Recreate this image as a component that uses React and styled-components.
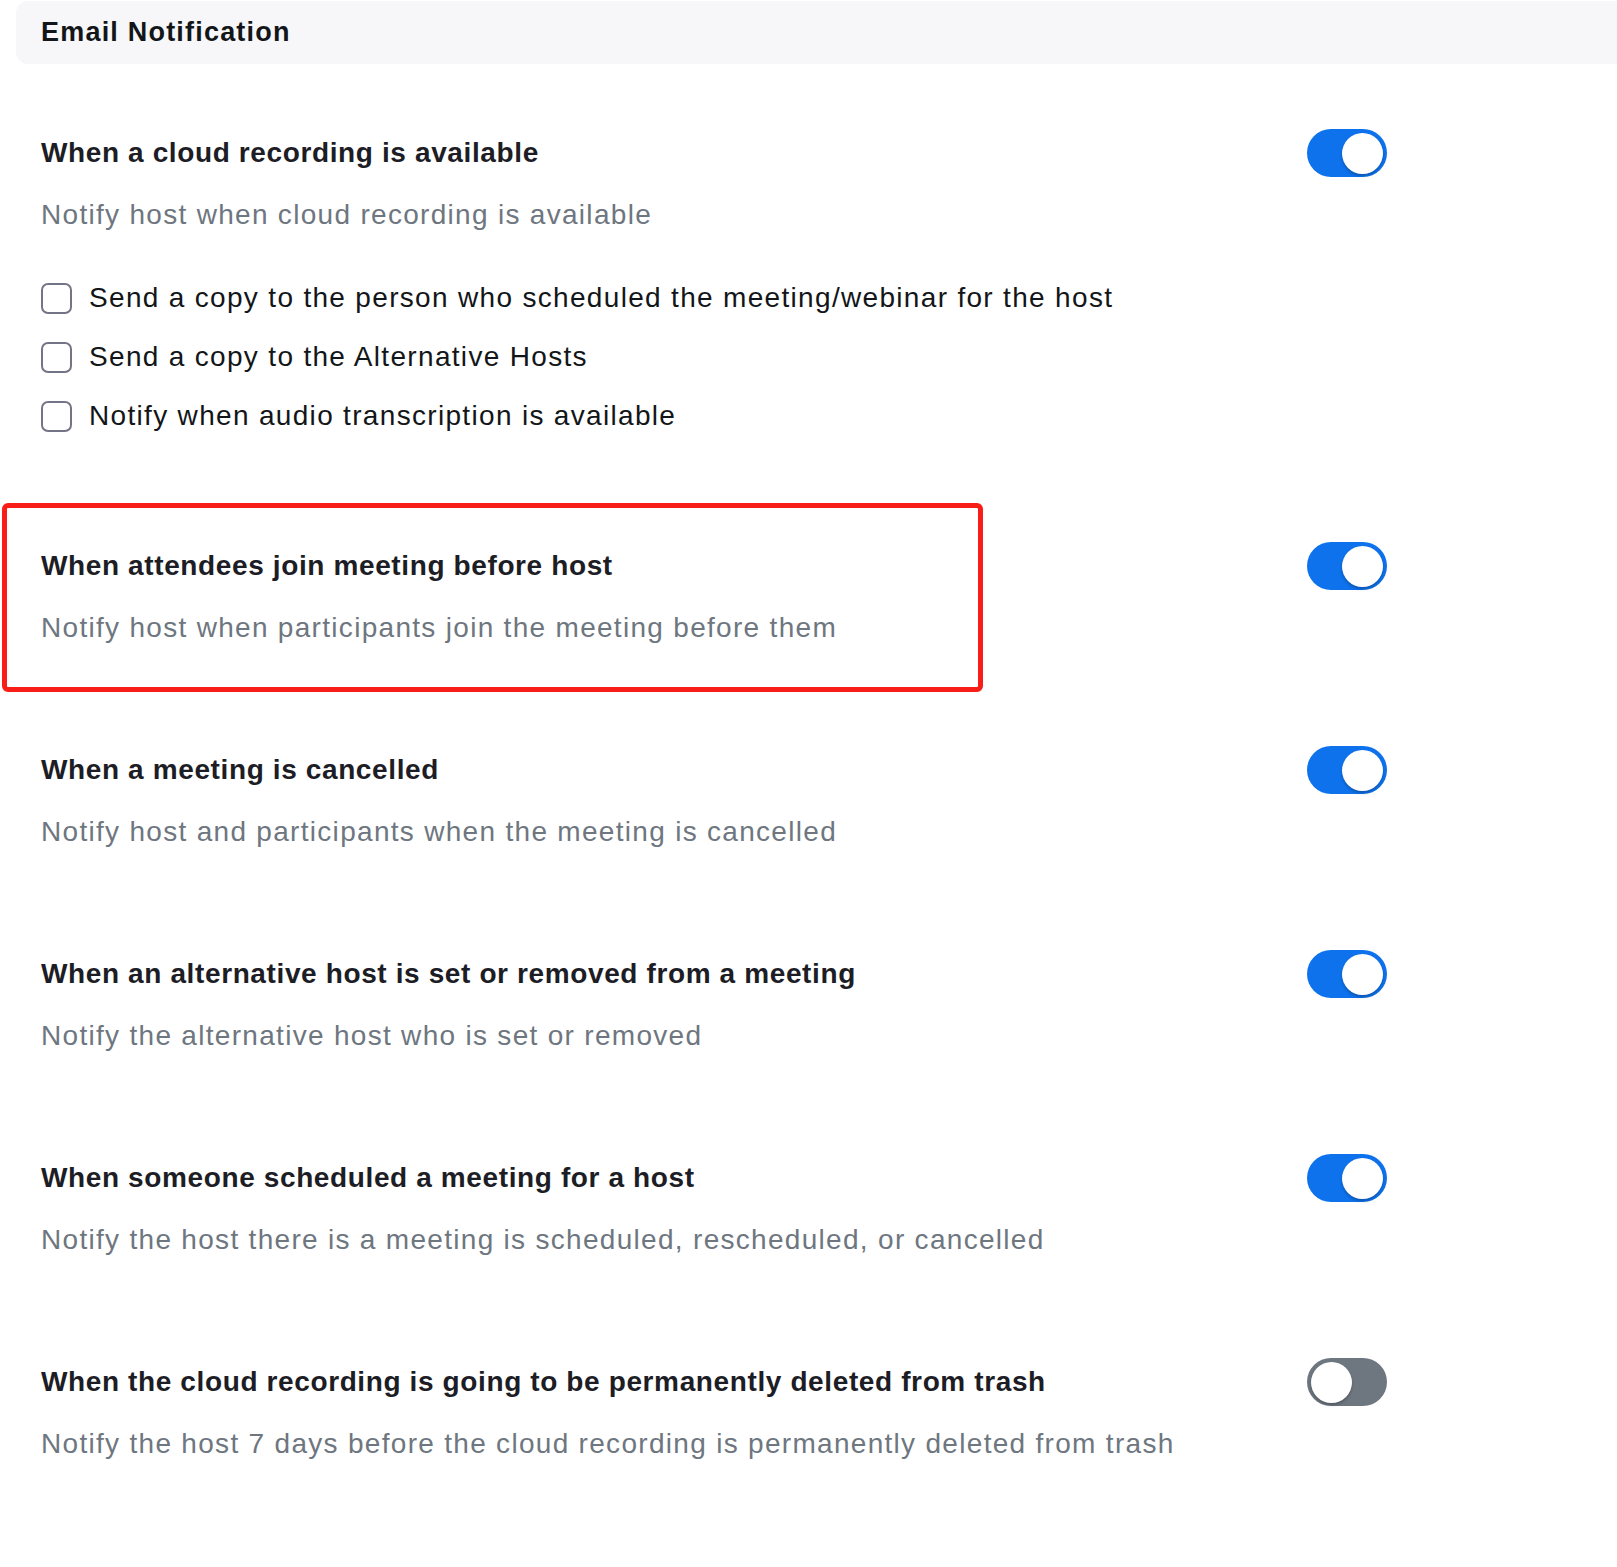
import React, { useState } from "react";
import styled, { createGlobalStyle } from "styled-components";

const GlobalStyle = createGlobalStyle`
  body {
    margin: 0;
    background: #ffffff;
    font-family: "Liberation Sans", Arial, sans-serif;
    color: #131619;
  }
`;

const settings = [
  {
    title: "When a cloud recording is available",
    desc: "Notify host when cloud recording is available",
    on: true,
    options: [
      "Send a copy to the person who scheduled the meeting/webinar for the host",
      "Send a copy to the Alternative Hosts",
      "Notify when audio transcription is available",
    ],
  },
  {
    title: "When attendees join meeting before host",
    desc: "Notify host when participants join the meeting before them",
    on: true,
    marked: true,
  },
  {
    title: "When a meeting is cancelled",
    desc: "Notify host and participants when the meeting is cancelled",
    on: true,
  },
  {
    title: "When an alternative host is set or removed from a meeting",
    desc: "Notify the alternative host who is set or removed",
    on: true,
  },
  {
    title: "When someone scheduled a meeting for a host",
    desc: "Notify the host there is a meeting is scheduled, rescheduled, or cancelled",
    on: true,
  },
  {
    title: "When the cloud recording is going to be permanently deleted from trash",
    desc: "Notify the host 7 days before the cloud recording is permanently deleted from trash",
    on: false,
  },
];

const Toggle = ({ on, onClick }) => (
  <Track $on={on} onClick={onClick}>
    <Knob $on={on} />
  </Track>
);

const Setting = ({ item }) => {
  const [on, setOn] = useState(item.on);
  return (
    <Section $marked={item.marked}>
      <Title>{item.title}</Title>
      <Toggle on={on} onClick={() => setOn(!on)} />
      <Desc>{item.desc}</Desc>
      {item.options && (
        <Options>
          {item.options.map((o) => (
            <Option key={o}>
              <Box type="checkbox" />
              <span>{o}</span>
            </Option>
          ))}
        </Options>
      )}
    </Section>
  );
};

const App = () => {
  return (
    <Page>
      <GlobalStyle />
      <Header>Email Notification</Header>
      <List>
        {settings.map((s) => (
          <Setting key={s.title} item={s} />
        ))}
      </List>
    </Page>
  );
};

const Page = styled.div`
  width: 1617px;
  min-height: 1567px;
  padding-top: 1px;
  box-sizing: border-box;
`;

const Header = styled.div`
  margin-left: 16px;
  height: 63px;
  background: #f7f7fa;
  border-radius: 12px 0 0 12px;
  padding-left: 25px;
  display: flex;
  align-items: center;
  font-size: 27px;
  font-weight: 700;
  letter-spacing: 1.2px;
  color: #131619;
`;

const List = styled.div`
  display: flex;
  flex-direction: column;
  gap: 19px;
  margin-top: 28px;
`;

const Section = styled.div`
  position: relative;
  display: grid;
  grid-template-columns: 1266px 80px;
  align-items: center;
  padding: 40px 0 41px 41px;

  &::after {
    content: "";
    display: ${(p) => (p.$marked ? "block" : "none")};
    position: absolute;
    left: 2px;
    top: -2px;
    width: 981px;
    height: calc(100% + 4px);
    box-sizing: border-box;
    border: 5px solid #f81d16;
    border-radius: 6px;
    pointer-events: none;
  }
`;

const Title = styled.div`
  grid-column: 1;
  font-size: 28px;
  line-height: 42px;
  font-weight: 700;
  color: #1d1d26;
  letter-spacing: 0.62px;
`;

const Desc = styled.div`
  grid-column: 1;
  margin-top: 20px;
  font-size: 28px;
  line-height: 42px;
  letter-spacing: 1.3px;
  color: #6e7680;
`;

const Options = styled.div`
  grid-column: 1;
  display: flex;
  flex-direction: column;
  gap: 17px;
  margin-top: 41px;
  padding-bottom: 8px;
`;

const Option = styled.label`
  display: flex;
  align-items: center;
  gap: 17px;
  font-size: 28px;
  line-height: 42px;
  letter-spacing: 1.32px;
  color: #131619;
`;

const Box = styled.input`
  appearance: none;
  margin: 0;
  width: 31px;
  height: 31px;
  box-sizing: border-box;
  border: 2px solid #747487;
  border-radius: 7px;
  background: #fff;
  flex-shrink: 0;
`;

const Track = styled.div`
  grid-column: 2;
  grid-row: 1;
  margin: -3px 0;
  width: 80px;
  height: 48px;
  border-radius: 24px;
  background: ${(p) => (p.$on ? "#0e72ed" : "#6e7680")};
  position: relative;
  cursor: pointer;
`;

const Knob = styled.div`
  position: absolute;
  top: 3.5px;
  left: ${(p) => (p.$on ? "35px" : "4px")};
  width: 41px;
  height: 41px;
  border-radius: 50%;
  background: #fff;
  box-shadow: 0 2px 3px rgba(0, 0, 0, 0.25);
`;

export default App;
